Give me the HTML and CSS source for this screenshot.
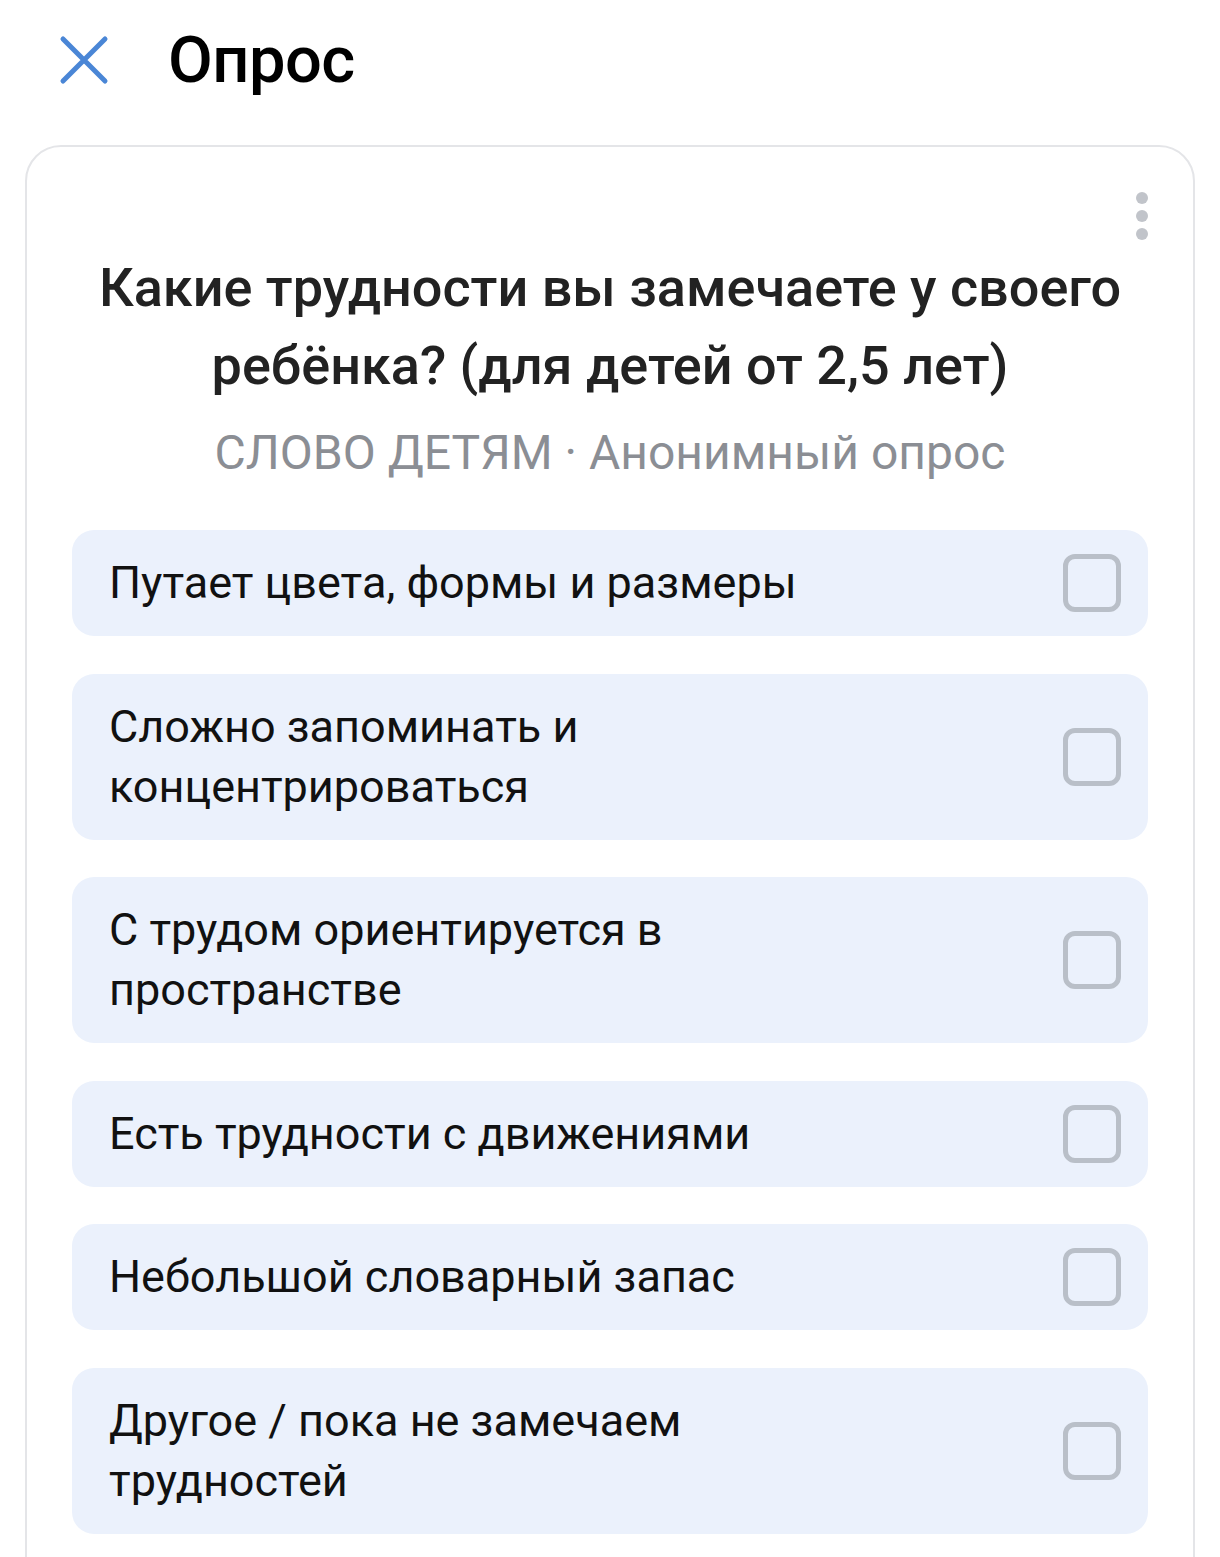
FILE: index.html
```html
<!DOCTYPE html>
<html lang="ru">
<head>
  <meta charset="UTF-8">
  <meta name="viewport" content="width=device-width, initial-scale=1.0">
  <title>Опрос</title>
  <link rel="stylesheet" href="styles.css">
</head>
<body>

  <!-- Top bar -->
  <header class="top-bar">
    <button class="close-button" aria-label="Закрыть">
      <svg width="50" height="50" viewBox="0 0 50 50">
        <path d="M4 4 L46 46 M46 4 L4 46" stroke="#4a86d6" stroke-width="5" stroke-linecap="round" fill="none"/>
      </svg>
    </button>
    <h1 class="top-title">Опрос</h1>
  </header>

  <!-- Poll card -->
  <div class="poll-card">
    <div class="poll-menu" aria-label="Меню">
      <span></span><span></span><span></span>
    </div>

    <h2 class="poll-question">Какие трудности вы замечаете у своего ребёнка? (для детей от 2,5 лет)</h2>
    <div class="poll-meta">СЛОВО ДЕТЯМ · Анонимный опрос</div>

    <ul class="poll-options">
      <li class="poll-option">
        <span class="option-text">Путает цвета, формы и размеры</span>
        <span class="option-check"></span>
      </li>
      <li class="poll-option">
        <span class="option-text">Сложно запоминать и концентрироваться</span>
        <span class="option-check"></span>
      </li>
      <li class="poll-option">
        <span class="option-text">С трудом ориентируется в пространстве</span>
        <span class="option-check"></span>
      </li>
      <li class="poll-option">
        <span class="option-text">Есть трудности с движениями</span>
        <span class="option-check"></span>
      </li>
      <li class="poll-option">
        <span class="option-text">Небольшой словарный запас</span>
        <span class="option-check"></span>
      </li>
      <li class="poll-option">
        <span class="option-text">Другое / пока не замечаем трудностей</span>
        <span class="option-check"></span>
      </li>
    </ul>
  </div>

</body>
</html>
```

FILE: styles.css
```css
body {
  font-family: Roboto, "Noto Sans", Arial, sans-serif;
  background-color: #ffffff;
  color: #000;
  margin: 0;
  padding: 0;
  overflow: hidden;
}

.top-bar {
  display: flex;
  align-items: center;
  height: 120px;
  padding-left: 59px;
}

.close-button {
  width: 50px;
  height: 50px;
  padding: 0;
  border: none;
  background: none;
  display: flex;
}

.top-title {
  margin: 0 0 0 59px;
  font-size: 65px;
  font-weight: 500;
  color: #000;
  letter-spacing: -0.5px;
}

.poll-card {
  position: relative;
  margin: 25px 25px 0;
  border: 2px solid #e4e5e8;
  border-radius: 36px;
  padding: 102px 45px 60px;
}

/* Three-dot menu in the top right corner */
.poll-menu {
  position: absolute;
  top: 45px;
  right: 45px;
  display: flex;
  flex-direction: column;
  gap: 6px;
}

.poll-menu span {
  width: 12px;
  height: 12px;
  border-radius: 50%;
  background-color: #c1c4ca;
}

.poll-question {
  margin: 0 auto;
  max-width: 1070px;
  text-align: center;
  font-size: 54px;
  line-height: 78px;
  font-weight: 500;
  color: #222;
}

.poll-meta {
  margin-top: 18px;
  text-align: center;
  font-size: 48px;
  line-height: 60px;
  color: #8b8e94;
}

.poll-options {
  list-style: none;
  margin: 47px 0 0;
  padding: 0;
  display: flex;
  flex-direction: column;
  gap: 37.5px;
}

.poll-option {
  display: flex;
  align-items: center;
  justify-content: space-between;
  background-color: #ebf1fc;
  border-radius: 22px;
  padding: 23px 27px 23px 37px;
}

.option-text {
  max-width: 780px;
  font-size: 45px;
  line-height: 60px;
  color: #111;
}

.option-check {
  width: 48px;
  height: 48px;
  border: 5px solid #b9bfc8;
  border-radius: 12px;
  flex-shrink: 0;
}
```
